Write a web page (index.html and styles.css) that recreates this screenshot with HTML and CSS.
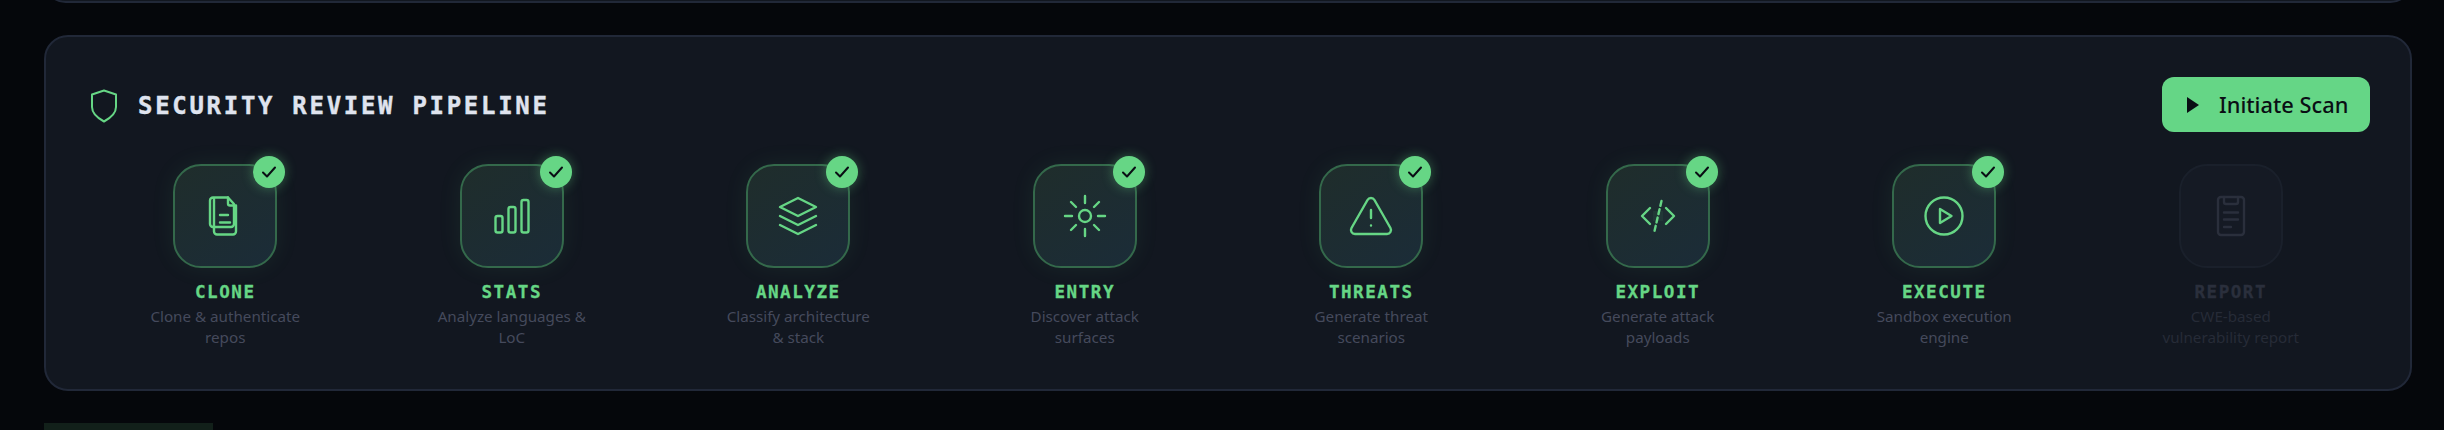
FILE: index.html
```html
<!DOCTYPE html>
<html lang="en">
<head>
<meta charset="utf-8">
<title>Security Review Pipeline</title>
<link rel="stylesheet" href="styles.css">
</head>
<body>
<main class="page">
  <div class="prev-card"></div>
  <section class="card">
    <header class="card-head">
      <div class="title-wrap">
        <svg class="shield" viewBox="0 0 36 36" fill="none"><path d="M18 3.500 L30 7.500 V20 C30 27 24.500 31 18 34.500 C11.500 31 6 27 6 20 V7.500 Z"/></svg>
        <h2 class="title">SECURITY REVIEW PIPELINE</h2>
      </div>
      <button class="scan-btn"><svg class="scan-icon" viewBox="0 0 14 16"><path d="M1 0 L13 8 L1 16 Z"/></svg><span>Initiate Scan</span></button>
    </header>
    <div class="steps">
      <div class="step done">
        <div class="tile">
          <svg class="ico" viewBox="0 0 48 48"><path d="M14 5.500h-2a3 3 0 0 0-3 3V32a3 3 0 0 0 3 3h18a3 3 0 0 0 3-3V12l-6-6.500H14a2 2 0 0 0-1 2V35"/><path d="M27 5.500v6a2 2 0 0 0 2 2h6v26a3 3 0 0 1-3 3H16a3 3 0 0 1-3-3v-4"/><path d="M19 23h8M19 30.500h10"/></svg>
          <span class="badge"><svg viewBox="0 0 16 16"><path d="M2 8.500 L6 12.500 L14 3.500"/></svg></span>
        </div>
        <div class="name">CLONE</div>
        <p class="desc">Clone &amp; authenticate<br>repos</p>
      </div>
      <div class="step done">
        <div class="tile">
          <svg class="ico" viewBox="0 0 48 48"><rect x="7.500" y="24" width="7" height="16.500" rx="2"/><rect x="20.500" y="15" width="7" height="25.500" rx="2"/><rect x="33.500" y="8" width="7" height="32.500" rx="2"/></svg>
          <span class="badge"><svg viewBox="0 0 16 16"><path d="M2 8.500 L6 12.500 L14 3.500"/></svg></span>
        </div>
        <div class="name">STATS</div>
        <p class="desc">Analyze languages &amp;<br>LoC</p>
      </div>
      <div class="step done">
        <div class="tile">
          <svg class="ico" viewBox="0 0 48 48"><path d="M24 6 L42 15 L24 24 L6 15 Z"/><path d="M6 24 L24 33 L42 24"/><path d="M6 33 L24 42 L42 33"/></svg>
          <span class="badge"><svg viewBox="0 0 16 16"><path d="M2 8.500 L6 12.500 L14 3.500"/></svg></span>
        </div>
        <div class="name">ANALYZE</div>
        <p class="desc">Classify architecture<br>&amp; stack</p>
      </div>
      <div class="step done">
        <div class="tile">
          <svg class="ico" viewBox="0 0 48 48"><circle cx="24" cy="24" r="6"/><path d="M24 4v7M24 37v7M4 24h7M37 24h7M10 10l5 5M33 33l5 5M10 38l5-5M33 15l5-5"/></svg>
          <span class="badge"><svg viewBox="0 0 16 16"><path d="M2 8.500 L6 12.500 L14 3.500"/></svg></span>
        </div>
        <div class="name">ENTRY</div>
        <p class="desc">Discover attack<br>surfaces</p>
      </div>
      <div class="step done">
        <div class="tile">
          <svg class="ico" viewBox="0 0 48 48"><path d="M43.460 36l-16-28a4 4 0 0 0-6.960 0l-16 28A4 4 0 0 0 8 42h32a4 4 0 0 0 3.460-6z"/><path d="M24 18v8M24 33.500h.02"/></svg>
          <span class="badge"><svg viewBox="0 0 16 16"><path d="M2 8.500 L6 12.500 L14 3.500"/></svg></span>
        </div>
        <div class="name">THREATS</div>
        <p class="desc">Generate threat<br>scenarios</p>
      </div>
      <div class="step done">
        <div class="tile">
          <svg class="ico" viewBox="0 0 48 48"><rect class="ghost" x="19" y="19" width="10" height="10"/><path d="M16 16 L8 24 L16 32M32 16 L40 24 L32 32"/><path class="dash" d="M27.500 9 L20.500 39"/></svg>
          <span class="badge"><svg viewBox="0 0 16 16"><path d="M2 8.500 L6 12.500 L14 3.500"/></svg></span>
        </div>
        <div class="name">EXPLOIT</div>
        <p class="desc">Generate attack<br>payloads</p>
      </div>
      <div class="step done">
        <div class="tile">
          <svg class="ico" viewBox="0 0 48 48"><circle cx="24" cy="24" r="18.500"/><path d="M20 17 L31.500 24 L20 31 Z"/></svg>
          <span class="badge"><svg viewBox="0 0 16 16"><path d="M2 8.500 L6 12.500 L14 3.500"/></svg></span>
        </div>
        <div class="name">EXECUTE</div>
        <p class="desc">Sandbox execution<br>engine</p>
      </div>
      <div class="step pending">
        <div class="tile">
          <svg class="ico" viewBox="0 0 48 48"><rect x="11" y="5" width="26" height="38" rx="3"/><path d="M17 5v5a2 2 0 0 0 2 2h10a2 2 0 0 0 2-2V5"/><path d="M17 20.500h14M17 27.500h14M17 35h7"/></svg>
        </div>
        <div class="name">REPORT</div>
        <p class="desc">CWE-based<br>vulnerability report</p>
      </div>
    </div>
  </section>
  <div class="next-block"></div>
</main>
</body>
</html>
```
FILE: styles.css
```css
* { box-sizing: border-box; }
html, body { margin: 0; height: 100%; }
body {
  background: #05070b;
  overflow: hidden;
  font-family: "Noto Sans", "Lato", sans-serif;
}
.page {
  display: flex;
  flex-direction: column;
  gap: 32px;
  padding: 0 32px 0 44px;
}
.prev-card {
  height: 43px;
  margin-top: -40px;
  background: #121720;
  border: 2px solid #212838;
  border-radius: 24px;
}
.card {
  background: #121720;
  border: 2px solid #212838;
  border-radius: 24px;
  padding: 40px;
  height: 356px;
}
.card-head {
  display: flex;
  align-items: center;
  justify-content: space-between;
  height: 55px;
  margin-bottom: 32px;
}
.title-wrap {
  display: flex;
  align-items: center;
  gap: 16px;
}
.shield {
  width: 36px;
  height: 36px;
  stroke: #66d685;
  stroke-width: 2;
  stroke-linejoin: round;
}
.title {
  margin: 2px 0 0;
  font-family: "DejaVu Sans Mono", monospace;
  font-size: 24px;
  font-weight: 700;
  letter-spacing: 2.700px;
  line-height: 32px;
  color: #dfe3ee;
  -webkit-text-stroke: 0.4px #dfe3ee;
}
.scan-btn {
  display: flex;
  align-items: center;
  gap: 19px;
  width: 208px;
  height: 55px;
  padding: 0 20px 0 24px;
  border: 0;
  border-radius: 12px;
  background: #65d686;
  color: #0a0e14;
  font-family: inherit;
  font-size: 21.800px;
  font-weight: 500;
}
.scan-icon {
  width: 14px;
  height: 16px;
  flex: none;
  fill: #0a0e14;
}
.steps {
  display: flex;
  gap: 8px;
}
.step {
  flex: 1 1 0;
  display: flex;
  flex-direction: column;
  align-items: center;
}
.tile {
  position: relative;
  display: flex;
  align-items: center;
  justify-content: center;
  width: 104px;
  height: 104px;
  border-radius: 28px;
  border: 2px solid #34694b;
  background: linear-gradient(145deg, #1f2d2b, #1b2c38);
  box-shadow: 0 0 24px rgba(102, 214, 133, 0.08);
}
.ico {
  width: 48px;
  height: 48px;
  fill: none;
  stroke: #66d685;
  stroke-width: 2.400;
  stroke-linecap: round;
  stroke-linejoin: round;
}
.ico .ghost {
  fill: rgba(102, 214, 133, 0.07);
  stroke: none;
}
.ico .dash {
  stroke-dasharray: 5 3.500;
}
.badge {
  position: absolute;
  top: -10px;
  right: -10px;
  display: flex;
  align-items: center;
  justify-content: center;
  width: 32px;
  height: 32px;
  border-radius: 50%;
  background: #66d685;
  box-shadow: 0 0 12px rgba(102, 214, 133, 0.4);
}
.badge svg {
  width: 16px;
  height: 16px;
  fill: none;
  stroke: #0a0e14;
  stroke-width: 2;
  stroke-linecap: round;
  stroke-linejoin: round;
}
.name {
  margin-top: 12px;
  font-family: "DejaVu Sans Mono", monospace;
  font-size: 17.600px;
  font-weight: 700;
  letter-spacing: 1.500px;
  line-height: 24px;
  color: #66d685;
  -webkit-text-stroke: 0.3px #66d685;
}
.desc {
  margin: 2px 0 0;
  text-align: center;
  font-size: 15.200px;
  line-height: 21px;
  color: #454a5c;
}
.pending .tile {
  border-color: #1a202b;
  background: #151a24;
  box-shadow: none;
}
.pending .ico {
  stroke: #2a2f3c;
}
.pending .name {
  color: #2a2f3c;
  -webkit-text-stroke-color: #2a2f3c;
}
.pending .desc {
  color: #262b37;
}
.next-block {
  width: 169px;
  height: 20px;
  background: #12201a;
}
```
